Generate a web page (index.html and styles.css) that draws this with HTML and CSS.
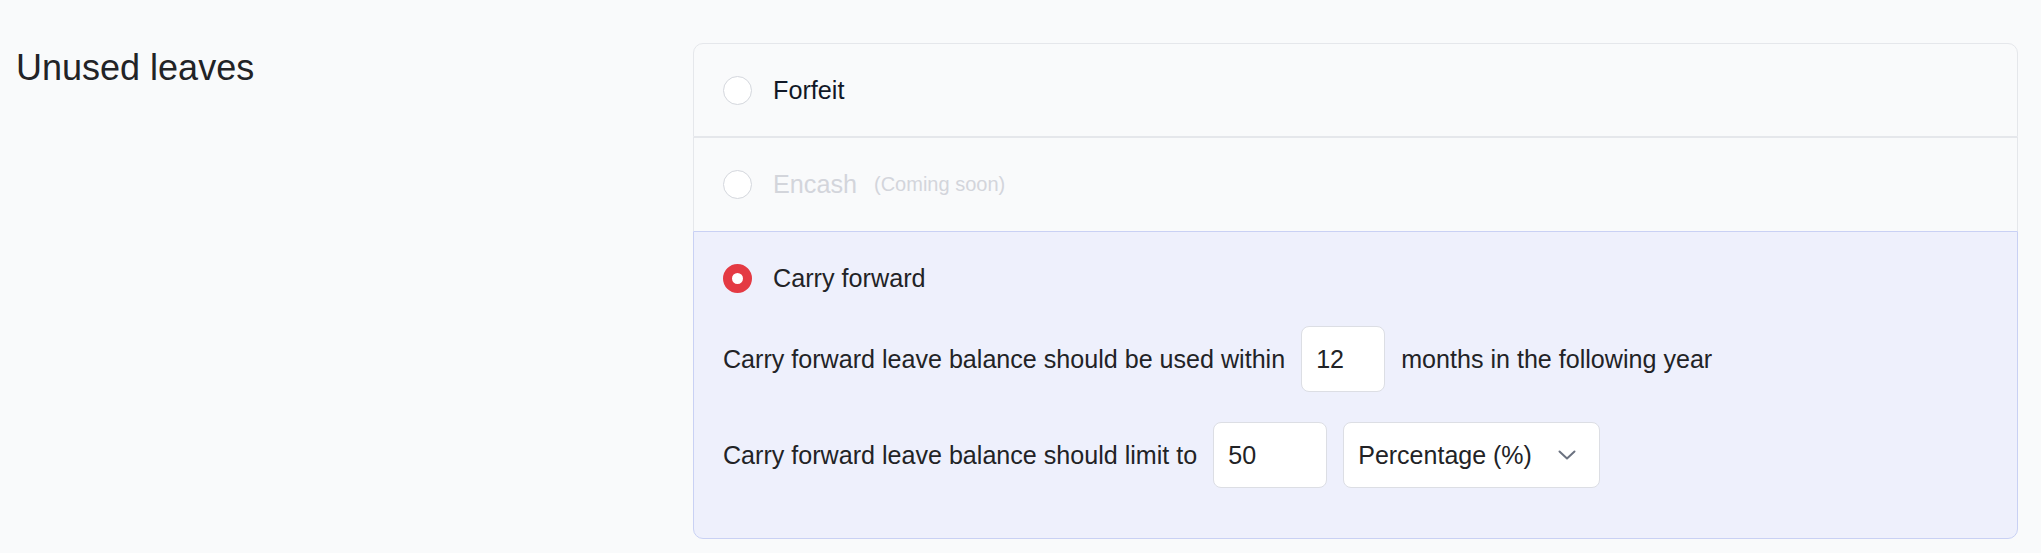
FILE: index.html
```html
<!DOCTYPE html>
<html lang="en">
<head>
<meta charset="utf-8">
<title>Unused leaves</title>
<link rel="stylesheet" href="styles.css">
</head>
<body>
<div class="section">
  <h2 class="section-title">Unused leaves</h2>
  <div class="options">
    <div class="option option-first">
      <div class="option-head">
        <span class="radio"></span>
        <span class="option-label">Forfeit</span>
      </div>
    </div>
    <div class="option option-middle option-disabled">
      <div class="option-head">
        <span class="radio"></span>
        <span class="option-label">Encash</span>
        <span class="option-note">(Coming soon)</span>
      </div>
    </div>
    <div class="option option-last option-selected">
      <div class="option-head">
        <span class="radio radio-checked"></span>
        <span class="option-label option-label-dark">Carry forward</span>
      </div>
      <div class="option-body">
        <div class="field-line">
          <span>Carry forward leave balance should be used within</span>
          <input class="num-input num-input-sm" type="text" value="12">
          <span>months in the following year</span>
        </div>
        <div class="field-line">
          <span>Carry forward leave balance should limit to</span>
          <input class="num-input num-input-md" type="text" value="50">
          <div class="select">
            <span class="select-value">Percentage (%)</span>
            <svg class="chevron" width="18" height="10" viewBox="0 0 18 10" aria-hidden="true">
              <path d="M1.5 1.5 L9 8.5 L16.5 1.5" fill="none" stroke="#6b7280" stroke-width="2" stroke-linecap="round" stroke-linejoin="round"/>
            </svg>
          </div>
        </div>
      </div>
    </div>
  </div>
</div>
</body>
</html>
```
FILE: styles.css
```css
html, body {
  margin: 0;
  background: #f9fafb;
}

body {
  font-family: "Liberation Sans", Arial, Helvetica, sans-serif;
  color: #222326;
  padding: 43px 23px 0 16px;
}

.section {
  display: grid;
  grid-template-columns: 677px 1fr;
  align-items: start;
}

.section-title {
  margin: 0;
  padding-top: 3px;
  font-size: 36px;
  line-height: 44px;
  font-weight: 400;
  color: #222326;
}

.options {
  display: flex;
  flex-direction: column;
}

.option {
  padding: 32px 29px 32px;
  border: 1px solid #e5e7eb;
  background: #f9fafb;
}

.option-first {
  border-radius: 10px 10px 0 0;
  padding-bottom: 31px;
}

.option-middle {
  border-bottom: none;
}

.option-last {
  border-radius: 0 0 10px 10px;
  padding-bottom: 50px;
}

.option-selected {
  background: #eef0fc;
  border-color: #c9d1f4;
}

.option-head {
  display: flex;
  align-items: center;
  gap: 21px;
  height: 29px;
  font-size: 25.2px;
  line-height: 29px;
}

.radio {
  box-sizing: border-box;
  width: 29px;
  height: 29px;
  border-radius: 50%;
  background: #ffffff;
  border: 1px solid #d4d7dd;
  flex: none;
}

.radio-checked {
  border: 9.5px solid #e43a43;
  background: #ffffff;
}

.option-label {
  color: #111827;
}

.option-label-dark {
  color: #222326;
}

.option-disabled .option-label {
  color: #d3d5db;
}

.option-note {
  font-size: 20px;
  color: #d3d5db;
  margin-left: -4px;
}

.option-body {
  margin-top: 33px;
  display: flex;
  flex-direction: column;
  gap: 30px;
}

.field-line {
  display: flex;
  align-items: center;
  gap: 16px;
  height: 66px;
  font-size: 25.1px;
  color: #222326;
}

.num-input {
  box-sizing: border-box;
  height: 66px;
  padding: 0 14px;
  border: 1px solid #dcdee4;
  border-radius: 8px;
  background: #ffffff;
  font-family: inherit;
  font-size: 25.1px;
  color: #222326;
  outline: none;
}

.num-input-sm {
  width: 84px;
}

.num-input-md {
  width: 114px;
}

.select {
  box-sizing: border-box;
  display: flex;
  align-items: center;
  gap: 24px;
  width: 257px;
  height: 66px;
  padding: 0 23px 0 14px;
  border: 1px solid #dcdee4;
  border-radius: 8px;
  background: #ffffff;
  font-size: 25px;
  color: #222326;
}

.select-value {
  flex: 1;
  white-space: nowrap;
}

.chevron {
  flex: none;
}
```
